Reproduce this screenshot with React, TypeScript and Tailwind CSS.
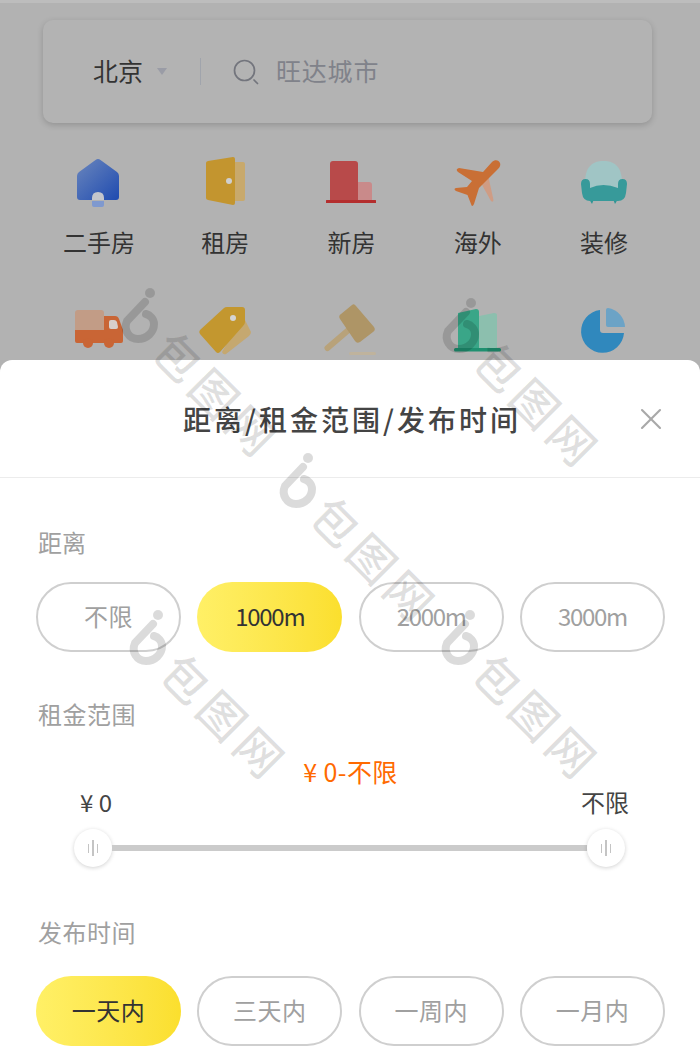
import { X } from "lucide-react";

const font = "font-['Noto_Sans_CJK_SC','Noto_Sans',sans-serif]";

function HouseIcon() {
  return (
    <svg viewBox="0 0 64 64" className="size-16">
      <defs>
        <linearGradient id="house" x1="0" y1="0" x2="1" y2="1">
          <stop offset="0" stopColor="#6a86bd" />
          <stop offset="1" stopColor="#1f4bb0" />
        </linearGradient>
      </defs>
      <path d="M28.5 9 Q31 7 33.5 9 L50 21 Q52 22.5 52 25 L52 46 Q52 49 49 49 L13 49 Q10 49 10 46 L10 25 Q10 22.5 12 21 Z" fill="url(#house)" />
      <path d="M25 49 L25 47 Q25 41 31 41 Q37 41 37 47 L37 49 Z" fill="#c4c6cc" />
      <path d="M25 50 L37 50 L37 54 Q37 56 35 56 L27 56 Q25 56 25 54 Z" fill="#7f99cf" />
    </svg>
  );
}

function DoorIcon() {
  return (
    <svg viewBox="0 0 64 64" className="size-16">
      <rect x="40" y="11" width="12" height="39" rx="2" fill="#c8a96c" />
      <path d="M15 10 L40 6 Q42 6 42 8 L42 52 Q42 54 40 54 L15 49 Q13 48.5 13 47 L13 12 Q13 10.5 15 10 Z" fill="#c3952f" />
      <circle cx="36" cy="30" r="3" fill="#cfcfcf" />
    </svg>
  );
}

function NewHouseIcon() {
  return (
    <svg viewBox="0 0 64 64" className="size-16">
      <path d="M37 31 L50 31 Q53 31 53 34 L53 49 L37 49 Z" fill="#c98a8a" />
      <path d="M11 13 Q11 10 14 10 L36 10 Q39 10 39 13 L39 49 L11 49 Z" fill="#b84a4a" />
      <rect x="7" y="49" width="50" height="3" rx="0.5" fill="#b42e2e" />
    </svg>
  );
}

function PlaneIcon() {
  return (
    <svg viewBox="0 0 64 64" className="size-16">
      <path d="M35 32 L42 24 L47.5 49 Q47 52 45 50 Z" fill="#cf9c84" />
      <path d="M46 11 C49 8 53 9 54 12 C55 15 53 17 51 19 L33 37 L28 53 Q26 57 25 53 L21.5 44 L10 40 Q7 38 10 37 L21 36 L26 30 L12 21 Q9 18 13 17 L37 21 Z" fill="#c96f35" />
    </svg>
  );
}

function SofaIcon() {
  return (
    <svg viewBox="0 0 64 64" className="size-16">
      <path d="M13 32 C13 15 21 10 31.5 10 C42 10 50 15 50 32 L50 40 L13 40 Z" fill="#a0c5c5" />
      <path d="M17 48 L20 53 L22 48 Z M41 48 L43 53 L46 48 Z" fill="#2f9494" />
      <path d="M9 33 Q9 28 13.5 28 Q18 28 18 33 L18 37 Q31 31 46 37 L46 33 Q46 28 50.5 28 Q55 28 55 33 L54 42 Q53 50 46 50 L18 50 Q11 50 10 42 Z" fill="#379a9a" />
    </svg>
  );
}

function TruckIcon() {
  return (
    <svg viewBox="0 0 64 64" className="size-16">
      <path d="M8 10 Q8 7 11 7 L34 7 Q37 7 37 10 L37 27 L8 27 Z" fill="#c29c86" />
      <path d="M8 27 L37 27 L37 13 L48 13 Q51 13 52 16 L56 27 L56 38 Q56 40 54 40 L10 40 Q8 40 8 38 Z" fill="#c96535" />
      <circle cx="21" cy="40" r="5" fill="#c96535" />
      <circle cx="42" cy="40" r="5" fill="#c96535" />
      <path d="M42 19 Q42 17 44 17 L47 17 Q49 17 50 19 L51 24 Q51 26 49 26 L44 26 Q42 26 42 24 Z" fill="#d8d0cc" />
    </svg>
  );
}

function TagIcon() {
  return (
    <svg viewBox="0 0 64 64" className="size-16">
      <path d="M50 13 L58 29 Q58 31 56 33 L33 51 Q30 52 29 49 Z" fill="#c5a870" />
      <path d="M31 5 Q32 4 34 4 L49 4 Q52 4 52 7 L52 19 Q52 21 50 23 L27 49 Q25 51 23 49 L7 31 Q5.5 29 7 27 Z" fill="#c3972f" />
      <circle cx="40" cy="15" r="3" fill="#d4d4d4" />
    </svg>
  );
}

function HammerIcon() {
  return (
    <svg viewBox="0 0 64 64" className="size-16">
      <path d="M29.5 27 L8.5 45" stroke="#b8a27a" strokeWidth="6" strokeLinecap="round" />
      <path d="M33 2 Q35 0 37 3 L55 24 Q57 27 54 29 L41 39 Q38 41 36 38 L21 16 Q19 13 22 11 Z" fill="#ae9566" />
      <rect x="30" y="49" width="27" height="3" rx="1.5" fill="#bfb39d" />
    </svg>
  );
}

function BuildingIcon() {
  return (
    <svg viewBox="0 0 64 64" className="size-16">
      <path d="M33 13 L48 10 Q51 10 51 12 L51 45 L33 45 Z" fill="#8cbfae" />
      <path d="M12 10 L30 6 Q33 6 33 9 L33 45 L12 45 Z" fill="#3aa688" />
      <rect x="8" y="45" width="47" height="3.5" rx="1.5" fill="#1f9070" />
    </svg>
  );
}

function PieIcon() {
  return (
    <svg viewBox="0 0 64 64" className="size-16">
      <path d="M28 7 A21.5 21.5 0 1 0 52 30 L31 30 Q28 30 28 27 Z" fill="#3088bd" />
      <path d="M34 7 Q34 5 36 5 A20 20 0 0 1 53 24 L36 24 Q34 24 34 22 Z" fill="#6ca3c6" />
    </svg>
  );
}

function Watermark({ className }: { className: string }) {
  return (
    <div className={`absolute ${className}`}>
      <svg viewBox="0 0 44 56" className="h-14 w-11" fill="none">
        <circle cx="32" cy="5" r="5" fill="#000" fillOpacity="0.14" />
        <path
          d="M27 14 L9 33 C5 42 11 51 20 51 C29 51 36 44 36 36 C36 31 32 27 28 26"
          stroke="#000"
          strokeOpacity="0.14"
          strokeWidth="8"
          strokeLinecap="round"
        />
      </svg>
      <span className="absolute left-[100px] top-[106px] -translate-x-1/2 -translate-y-1/2 rotate-45 whitespace-nowrap text-[46px] font-medium leading-none tracking-[6px] text-black/[0.12]">
        包图网
      </span>
    </div>
  );
}

function OptionButton({ label, active }: { label: string; active?: boolean }) {
  return (
    <button
      type="button"
      className={
        active
          ? "flex h-[70px] w-[145px] items-center justify-center rounded-[35px] bg-gradient-to-r from-[#fff066] to-[#fbdf2d] text-[24px] text-[#333]"
          : "flex h-[70px] w-[145px] items-center justify-center rounded-[35px] border-2 border-[#cfcfcf] bg-white text-[24px] text-[#a0a0a0]"
      }
    >
      <span className={/\d/.test(label) ? "-mt-[2px] tracking-[-1.3px]" : "-mt-[2px] tracking-[0.5px]"}>{label}</span>
    </button>
  );
}

function Knob() {
  return (
    <div className="flex size-[38px] shrink-0 items-center justify-center gap-[3px] rounded-full bg-white shadow-[0_1px_4px_rgba(0,0,0,0.18)]">
      <span className="h-[9px] w-[1.5px] bg-[#c4c4c4]" />
      <span className="h-[16px] w-[1.5px] bg-[#c4c4c4]" />
      <span className="h-[9px] w-[1.5px] bg-[#c4c4c4]" />
    </div>
  );
}

const CATEGORIES = [
  { name: "二手房", Icon: HouseIcon },
  { name: "租房", Icon: DoorIcon },
  { name: "新房", Icon: NewHouseIcon },
  { name: "海外", Icon: PlaneIcon },
  { name: "装修", Icon: SofaIcon },
];

const MORE_CATEGORIES = [TruckIcon, TagIcon, HammerIcon, BuildingIcon, PieIcon];

export default function App() {
  return (
    <div className={`relative h-[1053px] w-[700px] overflow-hidden bg-[#b2b2b2] ${font}`}>
      <div className="h-[360px] overflow-hidden">
        <div className="h-[3px] bg-[#bdbdbd]" />
        <div className="ml-[43px] mr-[48px] mt-[17px] flex h-[103px] items-center rounded-[10px] bg-[#b3b3b3] pl-[50px] shadow-[0_2px_6px_rgba(0,0,0,0.18)]">
          <span className="-mt-[2px] text-[25px] text-[#333]">北京</span>
          <span className="ml-[14px] h-0 w-0 border-x-[5.5px] border-t-[7px] border-x-transparent border-t-[#9a9ca6]" />
          <span className="ml-[33px] h-[27px] w-px bg-[#a0a4ac]" />
          <svg viewBox="0 0 26 26" className="ml-[32px] size-[26px]" fill="none" stroke="#73757d" strokeWidth="1.7">
            <circle cx="11.5" cy="11.5" r="10" />
            <path d="M21 21 L24.5 24.5" strokeLinecap="round" />
          </svg>
          <span className="-mt-[2px] ml-[17px] text-[25px] tracking-[0.8px] text-[#80828a]">旺达城市</span>
        </div>
        <div className="ml-[36px] mr-[33px] mt-[28px] grid grid-cols-5">
          {CATEGORIES.map(({ name, Icon }) => (
            <div key={name} className="flex flex-col items-center">
              <Icon />
              <span className="mt-[10px] text-[24px] leading-[34px] text-[#333]">{name}</span>
            </div>
          ))}
        </div>
        <div className="ml-[36px] mr-[33px] mt-[44px] grid grid-cols-5">
          {MORE_CATEGORIES.map((Icon, i) => (
            <div key={i} className="flex justify-center">
              <Icon />
            </div>
          ))}
        </div>
      </div>

      <div className="h-[693px] rounded-t-[12px] bg-white">
        <div className="relative flex h-[118px] items-center justify-center border-b border-[#ececec] pl-[4px]">
          <span className="text-[28px] font-medium tracking-[3px] text-[#444]">距离/租金范围/发布时间</span>
          <X className="absolute right-[31px] top-[41px] size-9 text-[#a8a8a8]" strokeWidth={1.4} />
        </div>
        <div className="pl-[36px] pr-[35px]">
          <div className="mt-[48px] pl-[2px] text-[24px] leading-[32px] text-[#a0a0a0]">距离</div>
          <div className="mt-[24px] flex justify-between">
            <OptionButton label="不限" />
            <OptionButton label="1000m" active />
            <OptionButton label="2000m" />
            <OptionButton label="3000m" />
          </div>
          <div className="mt-[46px] pl-[2px] text-[24px] leading-[32px] tracking-[0.5px] text-[#a0a0a0]">租金范围</div>
          <div className="mt-[25px] text-center text-[25px] leading-[32px] tracking-[0.4px] text-[#ff6a00]">¥ 0-不限</div>
          <div className="-mt-[1px] flex justify-between pl-[44px] pr-[36px] text-[24px] leading-[32px] text-[#444]">
            <span>¥ 0</span>
            <span>不限</span>
          </div>
          <div className="mt-[11px] flex items-center pl-[38px] pr-[40px]">
            <Knob />
            <div className="h-[6px] flex-1 bg-[#cbcbcb]" />
            <Knob />
          </div>
          <div className="mt-[49px] pl-[2px] text-[24px] leading-[32px] tracking-[0.5px] text-[#a0a0a0]">发布时间</div>
          <div className="mt-[28px] flex justify-between">
            <OptionButton label="一天内" active />
            <OptionButton label="三天内" />
            <OptionButton label="一周内" />
            <OptionButton label="一月内" />
          </div>
        </div>
      </div>

      <div className="pointer-events-none absolute inset-0">
        <Watermark className="left-[118px] top-[288px]" />
        <Watermark className="left-[439px] top-[298px]" />
        <Watermark className="left-[276px] top-[453px]" />
        <Watermark className="left-[126px] top-[610px]" />
        <Watermark className="left-[438px] top-[610px]" />
      </div>
    </div>
  );
}
